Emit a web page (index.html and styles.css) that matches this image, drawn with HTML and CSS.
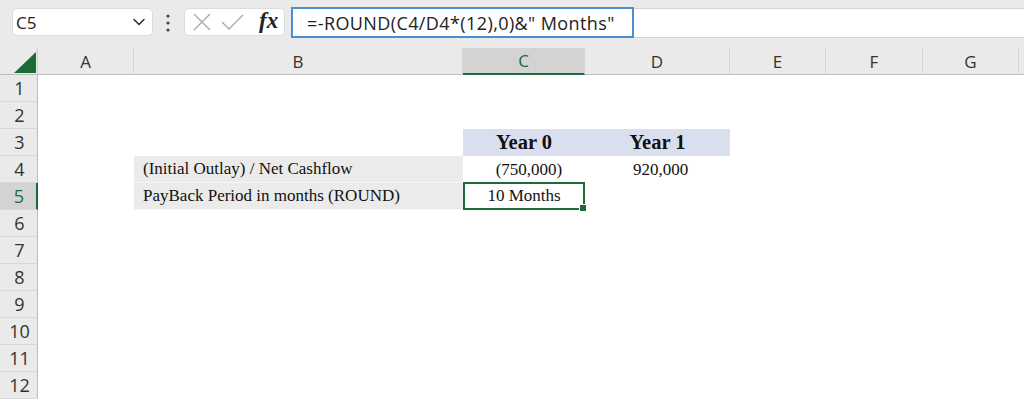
FILE: index.html
```html
<!DOCTYPE html>
<html>
<head>
<meta charset="utf-8">
<link rel="stylesheet" href="styles.css">
</head>
<body>
<div class="topbar">
  <div class="namebox">
    <span class="nb-text">C5</span>
    <svg class="chev" width="14" height="10" viewBox="0 0 14 10"><path d="M2 2.5 L7 7.5 L12 2.5" fill="none" stroke="#333" stroke-width="1.6" stroke-linecap="round" stroke-linejoin="round"/></svg>
  </div>
  <svg class="dots" width="6" height="20" viewBox="0 0 6 20"><circle cx="3" cy="3" r="1.6" fill="#444"/><circle cx="3" cy="10" r="1.6" fill="#444"/><circle cx="3" cy="17" r="1.6" fill="#444"/></svg>
  <div class="fnbox">
    <svg class="ico" width="20" height="20" viewBox="0 0 20 20"><path d="M2 2 L18 18 M18 2 L2 18" stroke="#a8a8a8" stroke-width="1.3" fill="none"/></svg>
    <svg class="ico" width="24" height="20" viewBox="0 0 24 20"><path d="M2 10 L9 17 L23 3" stroke="#a8a8a8" stroke-width="1.3" fill="none"/></svg>
    <span class="fx">fx</span>
  </div>
  <div class="formula">=-ROUND(C4/D4*(12),0)&amp;" Months"</div>
  <div class="strip"></div>
</div>
<div class="sheet">
  <div class="corner"><svg width="22" height="21" viewBox="0 0 22 21"><polygon points="0,21 22,21 22,0" fill="#1d6b3a"/></svg></div>
  <div class="ch">A</div><div class="ch">B</div><div class="ch ch-sel">C</div><div class="ch">D</div><div class="ch">E</div><div class="ch">F</div><div class="ch">G</div><div class="ch ch-end"></div>

  <div class="rh">1</div><div></div><div></div><div></div><div></div><div></div><div></div><div></div><div></div>
  <div class="rh">2</div><div></div><div></div><div></div><div></div><div></div><div></div><div></div><div></div>
  <div class="rh">3</div><div></div><div></div><div class="c hdr">Year 0</div><div class="c hdr">Year 1</div><div></div><div></div><div></div><div></div>
  <div class="rh">4</div><div></div><div class="c lbl">(Initial Outlay) / Net Cashflow</div><div class="c num num-c">(750,000)</div><div class="c num num-d">920,000</div><div></div><div></div><div></div><div></div>
  <div class="rh rh-sel">5</div><div></div><div class="c lbl">PayBack Period in months (ROUND)</div><div class="c num sel">10 Months</div><div></div><div></div><div></div><div></div><div></div>
  <div class="rh">6</div><div></div><div></div><div></div><div></div><div></div><div></div><div></div><div></div>
  <div class="rh">7</div><div></div><div></div><div></div><div></div><div></div><div></div><div></div><div></div>
  <div class="rh">8</div><div></div><div></div><div></div><div></div><div></div><div></div><div></div><div></div>
  <div class="rh">9</div><div></div><div></div><div></div><div></div><div></div><div></div><div></div><div></div>
  <div class="rh">10</div><div></div><div></div><div></div><div></div><div></div><div></div><div></div><div></div>
  <div class="rh">11</div><div></div><div></div><div></div><div></div><div></div><div></div><div></div><div></div>
  <div class="rh">12</div><div></div><div></div><div></div><div></div><div></div><div></div><div></div><div></div>
</div>
</body>
</html>
```
FILE: styles.css
```css
* { box-sizing: border-box; }
html, body { margin: 0; padding: 0; }
body {
  width: 1024px;
  height: 402px;
  overflow: hidden;
  background: #ffffff;
  font-family: "Open Sans", "Noto Sans", sans-serif;
}
.topbar {
  height: 48px;
  background: #eaeaea;
  display: flex;
  align-items: center;
  padding-left: 12px;
}
.namebox {
  width: 141px;
  height: 28px;
  background: #fff;
  border: 1px solid #dcdcdc;
  border-radius: 5px;
  display: flex;
  align-items: center;
  justify-content: space-between;
  padding: 0 6px 0 3px;
  margin-top: -4px;
}
.nb-text { font-size: 17px; color: #222; }
.chev { display: block; }
.dots { margin-left: 12px; margin-top: -3px; display: block; }
.fnbox {
  margin-left: 13px;
  width: 101px;
  height: 28px;
  background: #fff;
  border: 1px solid #dcdcdc;
  border-radius: 5px;
  display: flex;
  align-items: center;
  padding-left: 7px;
  gap: 8px;
  margin-top: -4px;
}
.ico { display: block; }
.fx {
  font-family: "Liberation Serif", serif;
  font-style: italic;
  font-weight: bold;
  font-size: 23px;
  color: #222;
  margin-left: 7px;
  line-height: 1;
  margin-top: -3px;
}
.formula {
  margin-left: 6px;
  width: 343px;
  height: 31px;
  border: 2px solid #4a8fd0;
  background: #fff;
  font-size: 18px;
  letter-spacing: 0.4px;
  color: #222;
  padding-left: 14px;
  display: flex;
  align-items: center;
  margin-top: -3px;
  white-space: nowrap;
}
.strip {
  flex: 1;
  height: 30px;
  background: #fff;
  border-top: 1px solid #d4d4d4;
  border-bottom: 1px solid #d4d4d4;
  margin-top: -3px;
}
.sheet {
  display: grid;
  grid-template-columns: 38px 96px 329px 122px 145px 96px 97px 96px 1fr;
  grid-template-rows: repeat(13, 27px);
}
.corner {
  background: #eaeaea;
  border-bottom: 1px solid #bdbdbd;
  border-right: 1px solid #d0d0d0;
  padding: 4px 0 0 14px;
}
.corner svg { display: block; }
.ch {
  background: #eaeaea;
  border-bottom: 1px solid #bdbdbd;
  border-right: 1px solid #d6d6d6;
  font-size: 17px;
  color: #333;
  display: flex;
  align-items: center;
  justify-content: center;
}
.ch-end { border-right: none; }
.ch-sel {
  background: #d3d3d3;
  color: #1d6b3a;
  border-bottom: 2px solid #1d6b3a;
}
.rh {
  background: #eaeaea;
  border-right: 1px solid #bdbdbd;
  border-bottom: 1px solid #d8d8d8;
  font-size: 18px;
  color: #333;
  display: flex;
  align-items: center;
  justify-content: center;
  padding-left: 2px;
}
.rh-sel {
  background: #d3d3d3;
  color: #1d6b3a;
  border-right: 2px solid #1d6b3a;
}
.c {
  font-family: "Liberation Serif", "Times New Roman", serif;
  color: #111;
  display: flex;
  align-items: center;
}
.hdr {
  background: #d9dfee;
  font-weight: bold;
  font-size: 20.5px;
  justify-content: center;
}
.lbl {
  background: #ebebeb;
  font-size: 17px;
  padding-left: 9px;
  border-bottom: 1px solid #f6f6f6;
}
.num {
  font-size: 17px;
  justify-content: center;
  padding-top: 1px;
}
.num-c { padding-left: 10px; }
.num-d { padding-left: 6px; }
.sel {
  position: relative;
  border: 2px solid #1d6b3a;
  margin-top: -1px;
  padding-top: 0;
}
.sel::after {
  content: "";
  position: absolute;
  right: -4px;
  bottom: -4px;
  width: 6px;
  height: 6px;
  background: #1d6b3a;
  border: 1px solid #fff;
}
```
